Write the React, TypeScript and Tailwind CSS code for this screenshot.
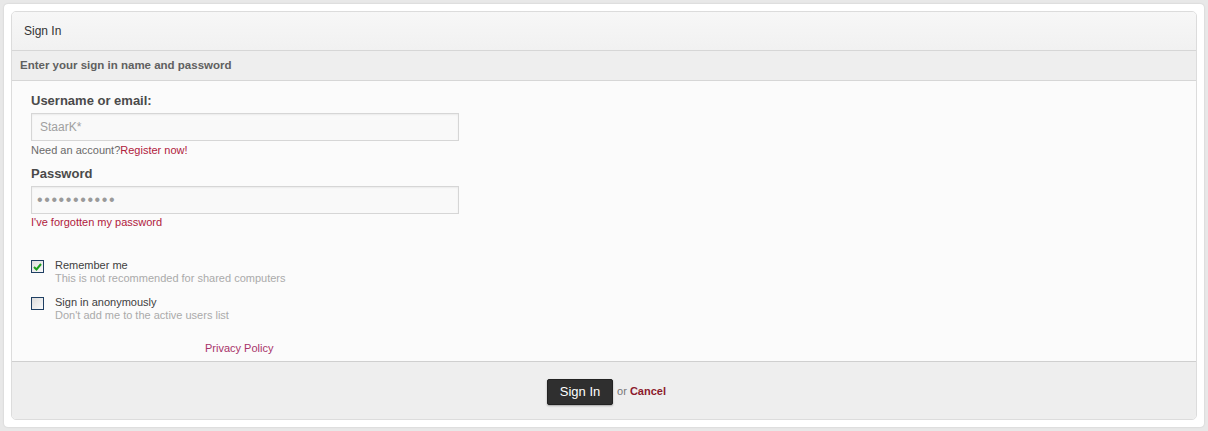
import React from "react";

export default function App() {
  const font = { fontFamily: "'Liberation Sans', Arial, sans-serif" };
  return (
    <div className="w-[1208px] h-[431px] bg-[#e8e8e8] p-[4px]" style={font}>
      <div className="h-[423px] bg-white rounded-[4px] p-[7px] shadow-[0_0_2px_rgba(0,0,0,0.15)]">
        <div className="h-[409px] rounded-[5px] border border-[#dcdcdc] bg-[#fbfbfb] flex flex-col overflow-hidden">
          <div className="h-[39px] shrink-0 bg-gradient-to-b from-[#f7f7f7] to-[#f1f1f1] border-b border-[#d6d6d6] flex items-center px-[12px] text-[12px] text-[#333]">
            Sign In
          </div>
          <div className="h-[30px] shrink-0 bg-[#eeeeee] border-b border-[#d6d6d6] flex items-center px-[8px] pt-[1px] text-[11.5px] font-bold text-[#606060]">
            Enter your sign in name and password
          </div>
          <div className="flex-1 bg-[#fbfbfb] pl-[19px] pt-[12px] flex flex-col">
            <div className="text-[13px] font-bold text-[#4a4a4a] leading-[16px]">Username or email:</div>
            <div className="mt-[4px] w-[428px] h-[28px] border border-[#d6d6d6] bg-[#f9f9f9] shadow-[inset_0_1px_2px_rgba(0,0,0,0.06)] flex items-center px-[8px] text-[12px] text-[#a0a0a0]">
              StaarK*
            </div>
            <div className="mt-[2px] text-[11px] leading-[14px] text-[#6a6a6a]">
              Need an account?<span className="text-[#b0203c]">Register now!</span>
            </div>
            <div className="mt-[9px] text-[13px] font-bold text-[#4a4a4a] leading-[16px]">Password</div>
            <div className="mt-[4px] w-[428px] h-[28px] border border-[#d6d6d6] bg-[#f9f9f9] shadow-[inset_0_1px_2px_rgba(0,0,0,0.06)] flex items-center px-[5px] text-[16px] tracking-[1.6px] text-[#9a9a9a]">
              •••••••••••
            </div>
            <div className="mt-[1px] text-[11px] leading-[14px] text-[#b0203c]">I've forgotten my password</div>

            <div className="mt-[30px] flex items-start gap-[11px]">
              <div className="mt-[1px] w-[13px] h-[13px] border border-[#1f3f63] bg-gradient-to-br from-[#dcdcdc] to-[#fafafa] flex items-center justify-center">
                <svg width="9" height="8" viewBox="0 0 9 8">
                  <path d="M1 4 L3.5 6.5 L8 1" stroke="#1b9e1b" strokeWidth="2" fill="none" />
                </svg>
              </div>
              <div className="flex flex-col">
                <div className="text-[11px] leading-[13px] text-[#404040]">Remember me</div>
                <div className="text-[11px] leading-[13px] text-[#aaaaaa]">This is not recommended for shared computers</div>
              </div>
            </div>
            <div className="mt-[11px] flex items-start gap-[11px]">
              <div className="mt-[1px] w-[13px] h-[13px] border border-[#1f3f63] bg-gradient-to-br from-[#dcdcdc] to-[#fafafa]" />
              <div className="flex flex-col">
                <div className="text-[11px] leading-[13px] text-[#404040]">Sign in anonymously</div>
                <div className="text-[11px] leading-[13px] text-[#aaaaaa]">Don't add me to the active users list</div>
              </div>
            </div>
            <div className="mt-[19px] pl-[174px] text-[11px] leading-[14px] text-[#a8336a]">Privacy Policy</div>
          </div>
          <div className="h-[58px] shrink-0 border-t border-[#cfcfcf] bg-[#eeeeee] flex items-center justify-center gap-[4px] pl-[5px] pt-[2px]">
            <div className="w-[66px] h-[26px] rounded-[2px] bg-[#2f2f2f] border border-[#222] shadow-[0_1px_2px_rgba(0,0,0,0.3)] flex items-center justify-center text-[13px] text-white">
              Sign In
            </div>
            <div className="text-[11px] text-[#777]">
              or <span className="font-bold text-[#8c1a2c]">Cancel</span>
            </div>
          </div>
        </div>
      </div>
    </div>
  );
}
